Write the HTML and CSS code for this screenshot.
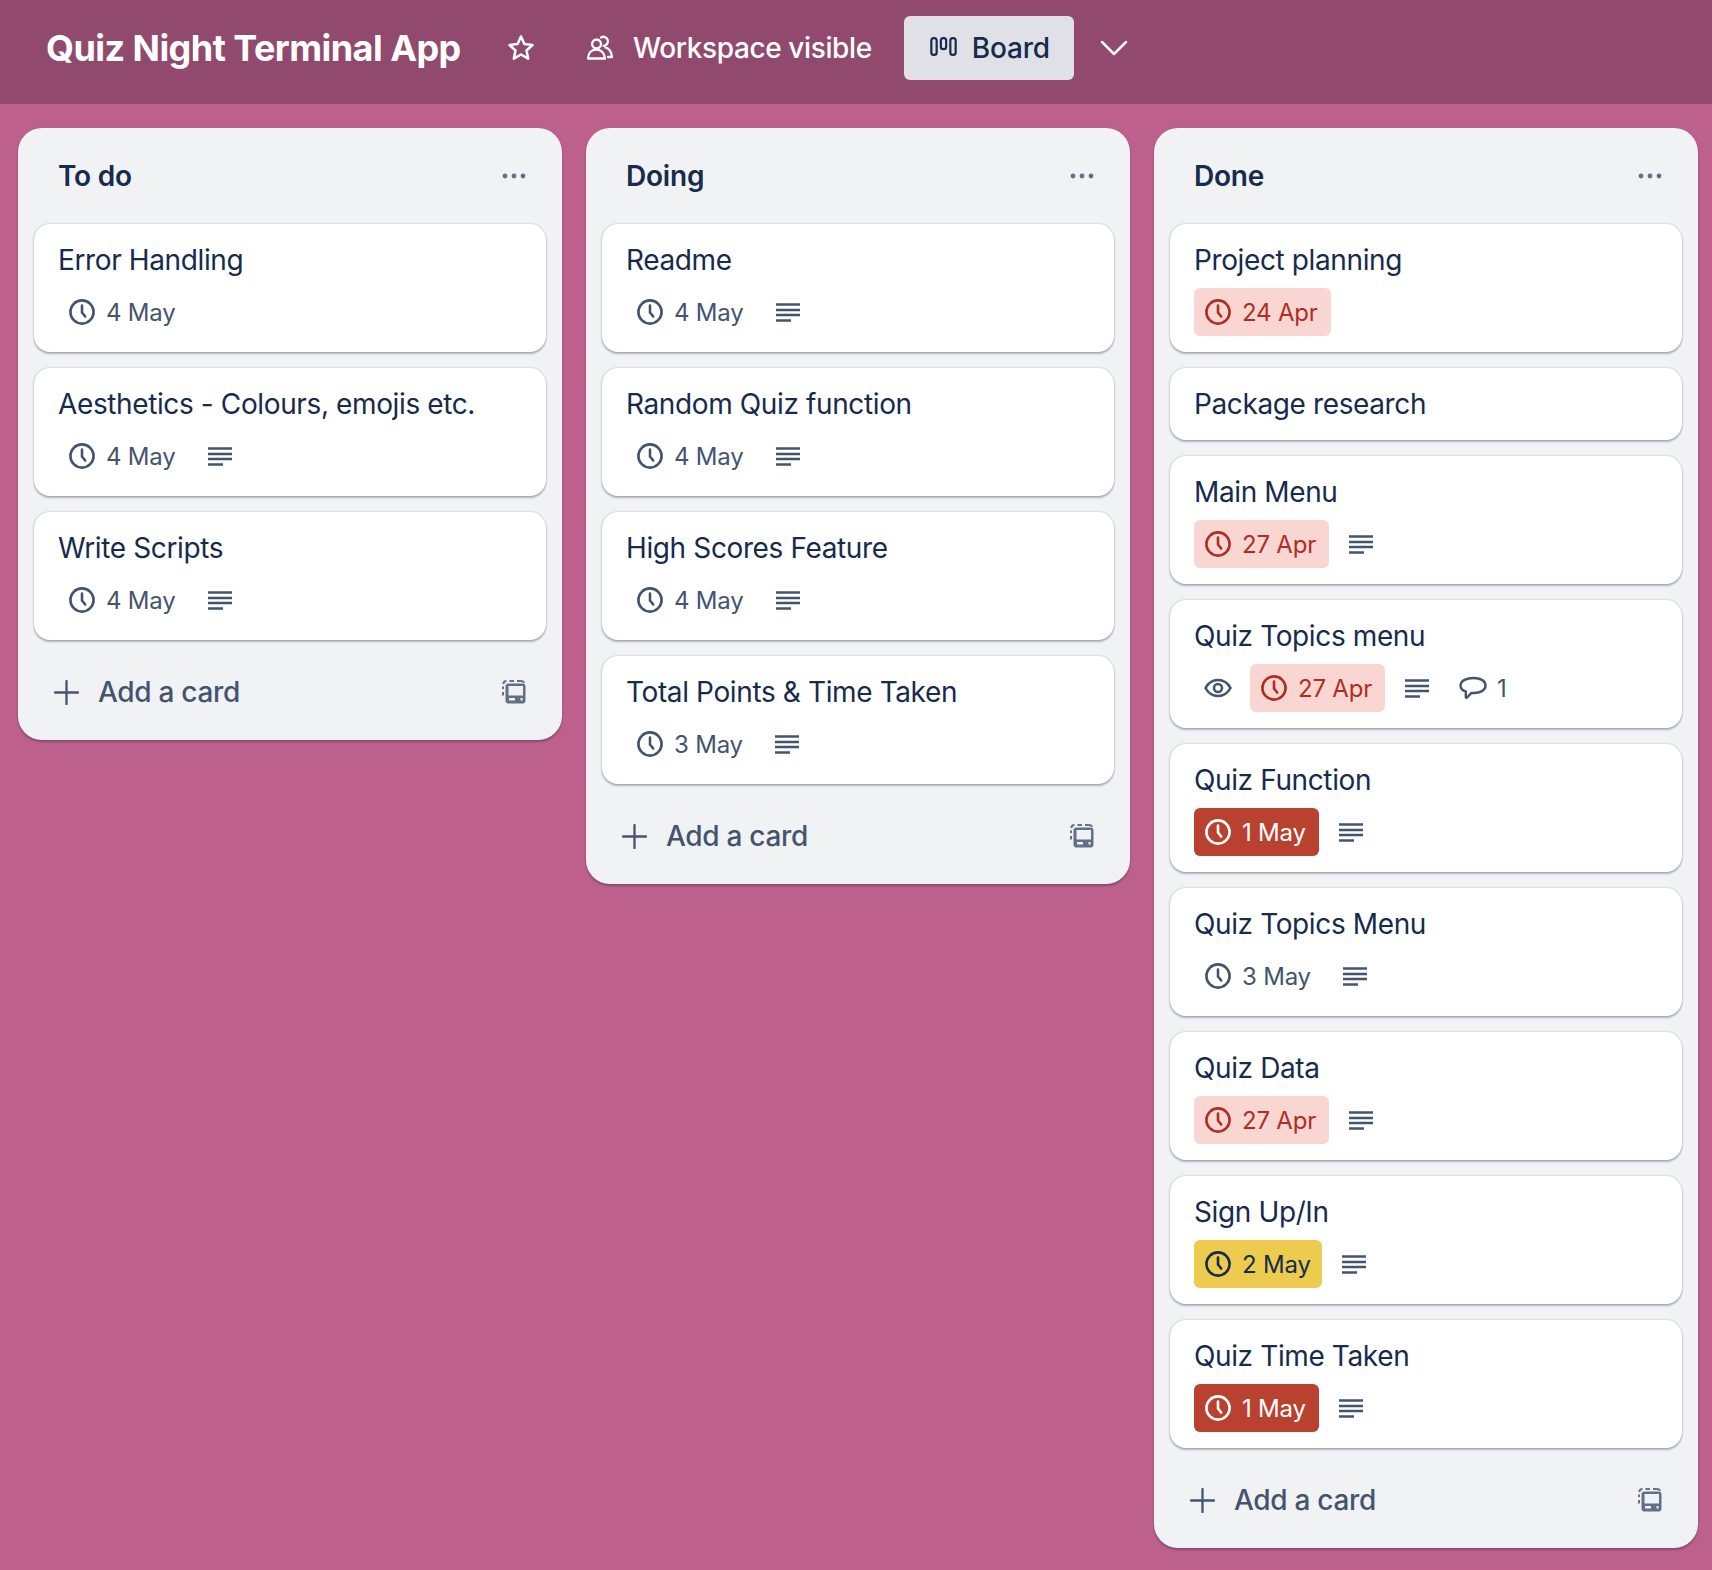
FILE: index.html
```html
<!DOCTYPE html>
<html lang="en">
<head>
<meta charset="utf-8">
<title>Quiz Night Terminal App</title>
<link rel="stylesheet" href="styles.css">
</head>
<body>
<svg class="defs" width="0" height="0" aria-hidden="true">
  <symbol id="i-clock" viewBox="0 0 28 28"><circle cx="14" cy="14" r="11.6" fill="none" stroke="currentColor" stroke-width="2.6"/><path d="M14 7.5V14.5L17.2 18.5" fill="none" stroke="currentColor" stroke-width="2.6" stroke-linecap="round" stroke-linejoin="round"/></symbol>
  <symbol id="i-desc" viewBox="0 0 24 20"><path d="M0 2.5H24M0 8H24M0 13H24M0 18.5H15" fill="none" stroke="currentColor" stroke-width="2.4"/></symbol>
  <symbol id="i-eye" viewBox="0 0 28 20"><path d="M1.5 10C4.5 4.5 9 2 14 2s9.500 2.500 12.500 8C23.500 15.500 19 18 14 18S4.500 15.500 1.500 10Z" fill="none" stroke="currentColor" stroke-width="2.6" stroke-linejoin="round"/><circle cx="14" cy="10" r="4" fill="none" stroke="currentColor" stroke-width="2.6"/></symbol>
  <symbol id="i-comment" viewBox="0 0 28 24"><path d="M14.500 2C21 2 26.500 4.500 26.500 9.500S21 17 15 17c-1 0-1.800 0-2.500-.1L8 21.500c-.6.500-1.200.1-1.200-.5V15.500C3.500 14.500 1.500 12.500 1.500 9.500 1.500 4.500 8 2 14.500 2Z" fill="none" stroke="currentColor" stroke-width="2.400" stroke-linejoin="round"/></symbol>
  <symbol id="i-star" viewBox="0 0 28 28"><path d="M14 2.500L17.400 10.100 25.500 11 19.500 16.500 21.200 24.700 14 20.500 6.800 24.700 8.500 16.500 2.500 11 10.600 10.100Z" fill="none" stroke="currentColor" stroke-width="2.500" stroke-linejoin="round"/></symbol>
  <symbol id="i-people" viewBox="0 0 28 28"><path d="M10.500 14.500a4.500 4.500 0 1 1 .1 0ZM2 24.500c0-5.500 3.500-9 8.500-9 4 0 8 3 8.500 9Z" fill="none" stroke="currentColor" stroke-width="2.300" stroke-linejoin="round"/><path d="M15 3.500a4.500 4.500 0 1 1 2.500 8.300M19.500 13.500c3.500 1 6 4.500 6.500 9.500h-4" fill="none" stroke="currentColor" stroke-width="2.300" stroke-linecap="round" stroke-linejoin="round"/></symbol>
  <symbol id="i-board" viewBox="0 0 28 20"><rect x="1.200" y="1.200" width="5.600" height="17.600" rx="2.600" fill="none" stroke="currentColor" stroke-width="2.300"/><rect x="11.200" y="1.200" width="5.600" height="11.600" rx="2.600" fill="none" stroke="currentColor" stroke-width="2.300"/><rect x="21.200" y="1.200" width="5.600" height="17.600" rx="2.600" fill="none" stroke="currentColor" stroke-width="2.300"/></symbol>
  <symbol id="i-chevron" viewBox="0 0 28 16"><path d="M2 2L14 14 26 2" fill="none" stroke="currentColor" stroke-width="2.500" stroke-linecap="round" stroke-linejoin="round"/></symbol>
  <symbol id="i-dots" viewBox="0 0 24 6"><circle cx="3" cy="3" r="2.400" fill="currentColor"/><circle cx="12" cy="3" r="2.400" fill="currentColor"/><circle cx="21" cy="3" r="2.400" fill="currentColor"/></symbol>
  <symbol id="i-plus" viewBox="0 0 24 24"><path d="M12 1V23M1 12H23" fill="none" stroke="currentColor" stroke-width="2.200" stroke-linecap="round"/></symbol>
  <symbol id="i-template" viewBox="0 0 24 24"><path d="M1 15.500V12M1 9V6.500M1.200 4C1.500 2.300 2.500 1.300 4.500 1.100M7.500 1H12M15 1H18.500C20 1 21.500 1.500 22.300 2.800" fill="none" stroke="currentColor" stroke-width="2"/><path fill-rule="evenodd" fill="currentColor" d="M6.500 3.500H20.500A3 3 0 0 1 23.500 6.500V20.500A3 3 0 0 1 20.500 23.500H6.500A3 3 0 0 1 3.500 20.500V6.500A3 3 0 0 1 6.500 3.500ZM6.500 6V15.500H21V6ZM7 18V20.500H13V18ZM18.500 18V20.500H20.500V18Z"/></symbol>
</svg>

<header class="topbar">
  <h1 class="board-name">Quiz Night Terminal App</h1>
  <span class="bar-icon star"><svg class="ic-star"><use href="#i-star"/></svg></span>
  <span class="bar-item"><svg class="ic-people"><use href="#i-people"/></svg>Workspace visible</span>
  <span class="view-btn"><svg class="ic-board"><use href="#i-board"/></svg>Board</span>
  <span class="bar-icon chevron"><svg class="ic-chevron"><use href="#i-chevron"/></svg></span>
</header>

<main class="board">
  <section class="list">
    <div class="list-head"><h2>To do</h2><span class="more"><svg class="ic-dots"><use href="#i-dots"/></svg></span></div>
    <div class="cards">
      <article class="card"><p class="card-title">Error Handling</p><div class="badges"><span class="due"><svg class="ic-clock"><use href="#i-clock"/></svg>4 May</span></div></article>
      <article class="card"><p class="card-title">Aesthetics - Colours, emojis etc.</p><div class="badges"><span class="due"><svg class="ic-clock"><use href="#i-clock"/></svg>4 May</span><span class="badge-ic"><svg class="ic-desc"><use href="#i-desc"/></svg></span></div></article>
      <article class="card"><p class="card-title">Write Scripts</p><div class="badges"><span class="due"><svg class="ic-clock"><use href="#i-clock"/></svg>4 May</span><span class="badge-ic"><svg class="ic-desc"><use href="#i-desc"/></svg></span></div></article>
    </div>
    <div class="add-row"><span class="add"><svg class="ic-plus"><use href="#i-plus"/></svg>Add a card</span><span class="tpl"><svg class="ic-template"><use href="#i-template"/></svg></span></div>
  </section>

  <section class="list">
    <div class="list-head"><h2>Doing</h2><span class="more"><svg class="ic-dots"><use href="#i-dots"/></svg></span></div>
    <div class="cards">
      <article class="card"><p class="card-title">Readme</p><div class="badges"><span class="due"><svg class="ic-clock"><use href="#i-clock"/></svg>4 May</span><span class="badge-ic"><svg class="ic-desc"><use href="#i-desc"/></svg></span></div></article>
      <article class="card"><p class="card-title">Random Quiz function</p><div class="badges"><span class="due"><svg class="ic-clock"><use href="#i-clock"/></svg>4 May</span><span class="badge-ic"><svg class="ic-desc"><use href="#i-desc"/></svg></span></div></article>
      <article class="card"><p class="card-title">High Scores Feature</p><div class="badges"><span class="due"><svg class="ic-clock"><use href="#i-clock"/></svg>4 May</span><span class="badge-ic"><svg class="ic-desc"><use href="#i-desc"/></svg></span></div></article>
      <article class="card"><p class="card-title">Total Points &amp; Time Taken</p><div class="badges"><span class="due"><svg class="ic-clock"><use href="#i-clock"/></svg>3 May</span><span class="badge-ic"><svg class="ic-desc"><use href="#i-desc"/></svg></span></div></article>
    </div>
    <div class="add-row"><span class="add"><svg class="ic-plus"><use href="#i-plus"/></svg>Add a card</span><span class="tpl"><svg class="ic-template"><use href="#i-template"/></svg></span></div>
  </section>

  <section class="list">
    <div class="list-head"><h2>Done</h2><span class="more"><svg class="ic-dots"><use href="#i-dots"/></svg></span></div>
    <div class="cards">
      <article class="card"><p class="card-title">Project planning</p><div class="badges"><span class="due overdue"><svg class="ic-clock"><use href="#i-clock"/></svg>24 Apr</span></div></article>
      <article class="card"><p class="card-title">Package research</p></article>
      <article class="card"><p class="card-title">Main Menu</p><div class="badges"><span class="due overdue"><svg class="ic-clock"><use href="#i-clock"/></svg>27 Apr</span><span class="badge-ic"><svg class="ic-desc"><use href="#i-desc"/></svg></span></div></article>
      <article class="card"><p class="card-title">Quiz Topics menu</p><div class="badges"><span class="badge-ic"><svg class="ic-eye"><use href="#i-eye"/></svg></span><span class="due overdue"><svg class="ic-clock"><use href="#i-clock"/></svg>27 Apr</span><span class="badge-ic"><svg class="ic-desc"><use href="#i-desc"/></svg></span><span class="badge-ic"><svg class="ic-comment"><use href="#i-comment"/></svg></span><span class="count">1</span></div></article>
      <article class="card"><p class="card-title">Quiz Function</p><div class="badges"><span class="due late"><svg class="ic-clock"><use href="#i-clock"/></svg>1 May</span><span class="badge-ic"><svg class="ic-desc"><use href="#i-desc"/></svg></span></div></article>
      <article class="card"><p class="card-title">Quiz Topics Menu</p><div class="badges"><span class="due"><svg class="ic-clock"><use href="#i-clock"/></svg>3 May</span><span class="badge-ic"><svg class="ic-desc"><use href="#i-desc"/></svg></span></div></article>
      <article class="card"><p class="card-title">Quiz Data</p><div class="badges"><span class="due overdue"><svg class="ic-clock"><use href="#i-clock"/></svg>27 Apr</span><span class="badge-ic"><svg class="ic-desc"><use href="#i-desc"/></svg></span></div></article>
      <article class="card"><p class="card-title">Sign Up/In</p><div class="badges"><span class="due soon"><svg class="ic-clock"><use href="#i-clock"/></svg>2 May</span><span class="badge-ic"><svg class="ic-desc"><use href="#i-desc"/></svg></span></div></article>
      <article class="card"><p class="card-title">Quiz Time Taken</p><div class="badges"><span class="due late"><svg class="ic-clock"><use href="#i-clock"/></svg>1 May</span><span class="badge-ic"><svg class="ic-desc"><use href="#i-desc"/></svg></span></div></article>
    </div>
    <div class="add-row"><span class="add"><svg class="ic-plus"><use href="#i-plus"/></svg>Add a card</span><span class="tpl"><svg class="ic-template"><use href="#i-template"/></svg></span></div>
  </section>
</main>
</body>
</html>
```

FILE: styles.css
```css
* { box-sizing: border-box; }
html, body { margin: 0; padding: 0; }
body {
  width: 1712px;
  height: 1570px;
  overflow: hidden;
  background: #be608c;
  font-family: Inter, "Noto Sans", "Liberation Sans", sans-serif;
  color: #172b4d;
}
.defs { position: absolute; }
svg { display: block; flex: none; }

.topbar {
  height: 104px;
  background: #914a6d;
  display: flex;
  align-items: center;
  padding: 0 0 8px 46px;
  color: #fff;
}
.board-name {
  width: 415px;
  margin: 0;
  font-size: 36px;
  font-weight: 700;
  letter-spacing: -0.55px;
  line-height: 48px;
  white-space: nowrap;
}
.bar-icon { display: flex; align-items: center; justify-content: center; }
.star { width: 28px; margin-left: 46px; }
.ic-star { width: 28px; height: 28px; }
.bar-item {
  display: flex;
  align-items: center;
  margin-left: 59px;
  font-size: 28px;
  font-weight: 500;
  letter-spacing: -0.38px;
  white-space: nowrap;
}
.ic-people { width: 28px; height: 28px; margin-right: 19px; margin-left: -8px; }
.view-btn {
  display: flex;
  align-items: center;
  height: 64px;
  width: 170px;
  margin-left: 32px;
  padding-left: 26px;
  border-radius: 6px;
  background: #dfe1e6;
  color: #172b4d;
  font-size: 28px;
  font-weight: 500;
  letter-spacing: -0.2px;
}
.ic-board { width: 27px; height: 19px; margin-right: 15px; margin-top: -4px; }
.chevron { margin-left: 26px; }
.ic-chevron { width: 28px; height: 16px; }

.board {
  display: flex;
  align-items: flex-start;
  gap: 24px;
  padding: 24px 0 0 18px;
}
.list {
  width: 544px;
  flex: none;
  background: #f1f2f4;
  border-radius: 24px;
  box-shadow: 0 2px 2px rgba(9, 30, 66, .3), 0 0 2px rgba(9, 30, 66, .12);
  padding-bottom: 12px;
}
.list-head {
  height: 96px;
  display: flex;
  align-items: center;
  justify-content: space-between;
  padding: 0 24px 0 40px;
}
.list-head h2 { margin: 0; font-size: 28px; font-weight: 600; line-height: 40px; letter-spacing: -0.2px; }
.more { width: 48px; display: flex; justify-content: center; color: #626f86; }
.ic-dots { width: 24px; height: 6px; }

.cards { display: flex; flex-direction: column; gap: 16px; padding: 0 16px; }
.card {
  background: #fff;
  border-radius: 16px;
  padding: 16px 24px;
  box-shadow: 0 2px 2px rgba(9, 30, 66, .28), 0 0 2px rgba(9, 30, 66, .3);
}
.card-title { margin: 0; font-size: 28px; line-height: 40px; font-weight: 400; letter-spacing: -0.38px; }
.badges { display: flex; align-items: center; gap: 8px; margin-top: 8px; color: #44546f; }
.due {
  display: flex;
  align-items: center;
  height: 48px;
  padding: 1px 12px 0 10px;
  border-radius: 6px;
  font-size: 24px;
  line-height: 32px;
  letter-spacing: -0.2px;
  white-space: nowrap;
}
.ic-clock { width: 28px; height: 28px; margin: -1px 10px 0 0; }
.overdue { background: #f9d6d2; color: #ae2e24; padding-right: 13px; }
.late { background: #b8422f; color: #fff; padding-right: 13px; }
.soon { background: #eccb4e; color: #172b4d; padding-right: 11px; }
.badge-ic { width: 48px; height: 48px; display: flex; align-items: center; justify-content: center; }
.ic-desc { width: 24px; height: 20px; }
.ic-eye { width: 28px; height: 20px; }
.ic-comment { width: 28px; height: 24px; }
.count { font-size: 24px; margin-left: -8px; }

.add-row {
  display: flex;
  align-items: center;
  justify-content: space-between;
  height: 72px;
  margin-top: 16px;
  padding: 0 24px 0 36px;
  color: #44546f;
}
.add { display: flex; align-items: center; font-size: 28px; font-weight: 500; letter-spacing: -0.3px; }
.ic-plus { width: 25px; height: 25px; margin-right: 19px; }
.tpl { width: 48px; display: flex; justify-content: center; color: #626f86; }
.ic-template { width: 24px; height: 24px; }
```
